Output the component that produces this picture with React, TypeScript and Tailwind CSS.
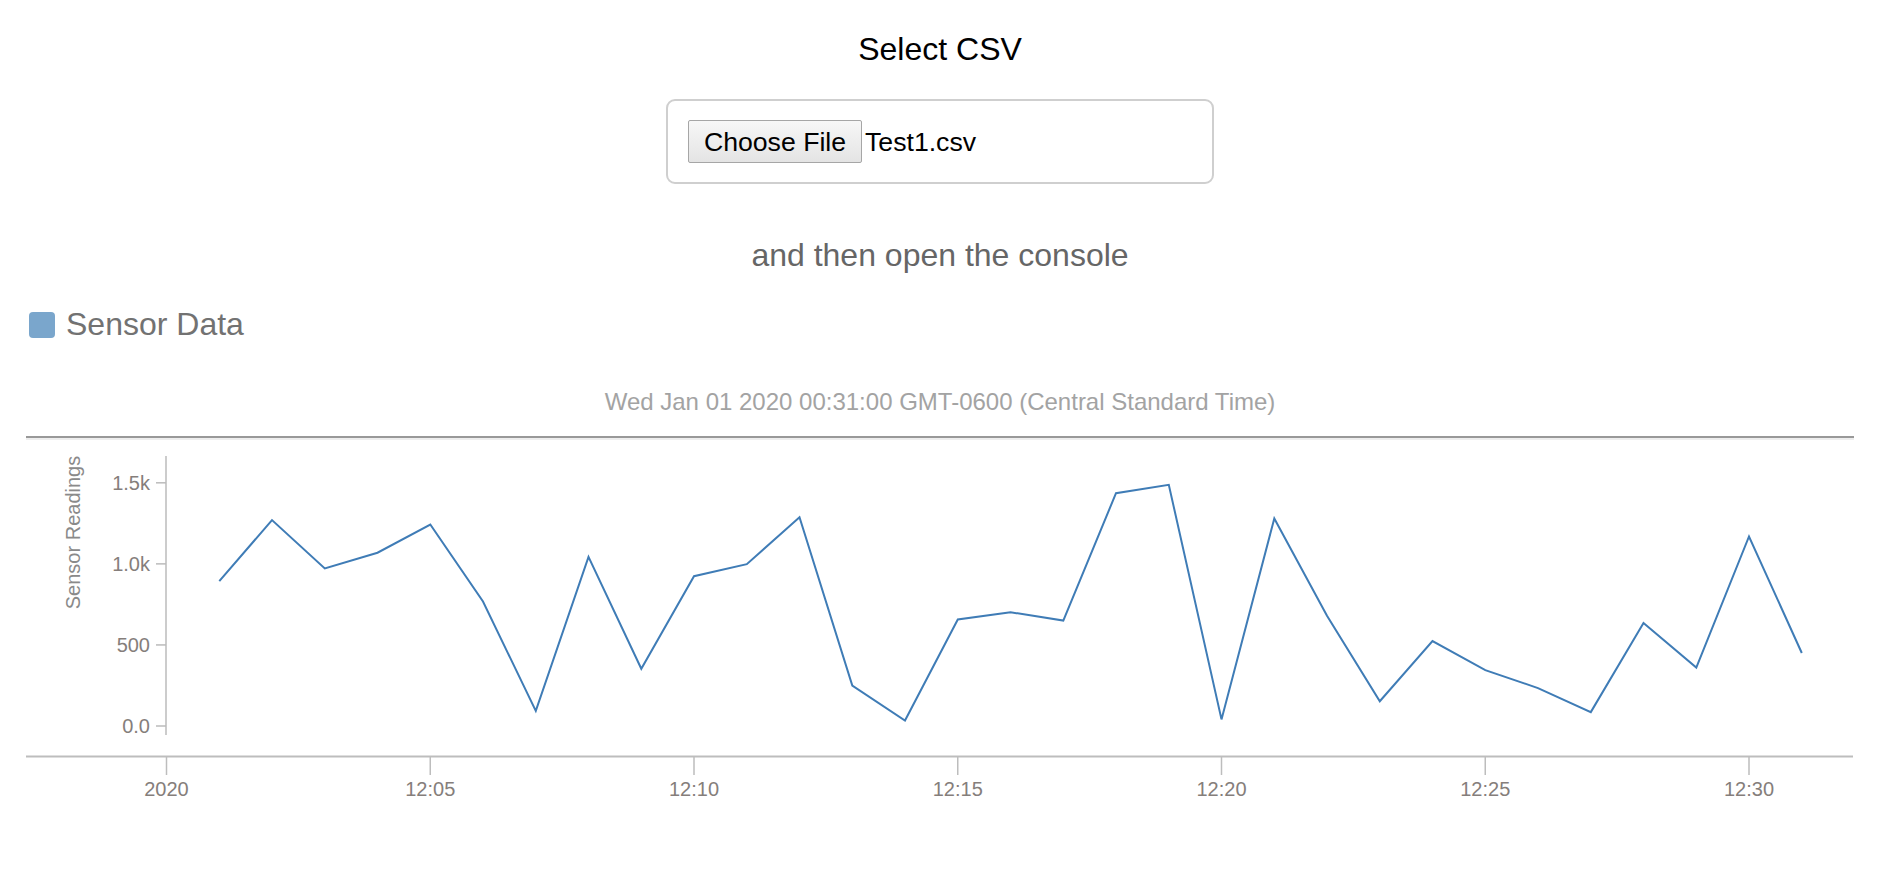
const readings = [
  894, 1270, 972, 1069, 1243, 768, 93, 1043, 353, 924, 998, 1288, 249, 34, 657,
  702, 650, 1436, 1488, 41, 1280, 680, 153, 524, 345, 234, 86, 635, 361, 1169,
  450,
];

const x0 = 166.5;
const perMinute = 52.75;
const yZero = 726;
const yScale = 0.16213;

const xAt = (minute: number) => x0 + minute * perMinute;
const yAt = (v: number) => yZero - v * yScale;

const yTicks = [
  { v: 1500, label: "1.5k" },
  { v: 1000, label: "1.0k" },
  { v: 500, label: "500" },
  { v: 0, label: "0.0" },
];

const xTicks = ["2020", "12:05", "12:10", "12:15", "12:20", "12:25", "12:30"];

function SensorChart() {
  const points = readings
    .map((v, i) => `${xAt(i + 1).toFixed(1)},${yAt(v).toFixed(1)}`)
    .join(" ");

  return (
    <svg
      width={1880}
      height={380}
      viewBox="0 440 1880 380"
      className="block"
      fontFamily="'Liberation Sans', Arial, sans-serif"
    >
      {/* y axis */}
      <line x1={166} y1={456} x2={166} y2={735} stroke="#bbb" strokeWidth={1.5} />
      {yTicks.map((t) => (
        <g key={t.label}>
          <line x1={156} y1={yAt(t.v)} x2={166} y2={yAt(t.v)} stroke="#bbb" strokeWidth={1.5} />
          <text x={150} y={yAt(t.v) + 7.3} textAnchor="end" fontSize={20} fill="#857e7b">
            {t.label}
          </text>
        </g>
      ))}
      <text
        transform="translate(80 532.5) rotate(-90)"
        textAnchor="middle"
        fontSize={20}
        fill="#8a8a8a"
      >
        Sensor Readings
      </text>

      {/* x axis */}
      <line x1={26} y1={756.5} x2={1853} y2={756.5} stroke="#bdbdbd" strokeWidth={2} />
      {xTicks.map((label, k) => (
        <g key={label}>
          <line
            x1={xAt(k * 5)}
            y1={757}
            x2={xAt(k * 5)}
            y2={775}
            stroke="#bdbdbd"
            strokeWidth={1.5}
          />
          <text x={xAt(k * 5)} y={796} textAnchor="middle" fontSize={20} fill="#857e7b">
            {label}
          </text>
        </g>
      ))}

      <polyline points={points} fill="none" stroke="#3f7cb6" strokeWidth={2} strokeLinejoin="miter" />
    </svg>
  );
}

export default function App() {
  return (
    <div className="w-[1880px] min-h-screen bg-white font-['Liberation_Sans',Arial,sans-serif]">
      <h2 className="pt-[31px] text-center text-[32px] leading-[37px] text-black">
        Select CSV
      </h2>

      <div className="mx-auto mt-[31px] h-[85px] w-[548px] rounded-[9px] border-2 border-[#cfcfcf] pl-[20px] pt-[19px]">
        <div className="flex h-[43px] items-center">
          <button className="flex h-[43px] w-[174px] items-center justify-center rounded-[2px] border border-[#a6a6a6] bg-linear-to-b from-[#f7f7f7] to-[#e4e4e4] text-[26.67px] text-black">
            Choose File
          </button>
          <span className="ml-[3px] text-[26.67px] text-black">Test1.csv</span>
        </div>
      </div>

      <p className="mt-[53px] text-center text-[32px] leading-[37px] text-[#666]">
        and then open the console
      </p>

      <div className="mt-[32px] ml-[29px] flex h-[37px] items-center gap-[11px]">
        <span className="h-[26px] w-[26px] rounded-[4px] bg-[#7aa6cc]" />
        <span className="text-[32px] leading-[37px] text-[#727272]">Sensor Data</span>
      </div>

      <div className="mt-[45px] text-center text-[24px] leading-[28px] text-[#a3a3a3]">
        Wed Jan 01 2020 00:31:00 GMT-0600 (Central Standard Time)
      </div>

      <div className="mx-[26px] mt-[20px] h-[4px] border-t-2 border-[#999] bg-[#eee]" />

      <SensorChart />
    </div>
  );
}
